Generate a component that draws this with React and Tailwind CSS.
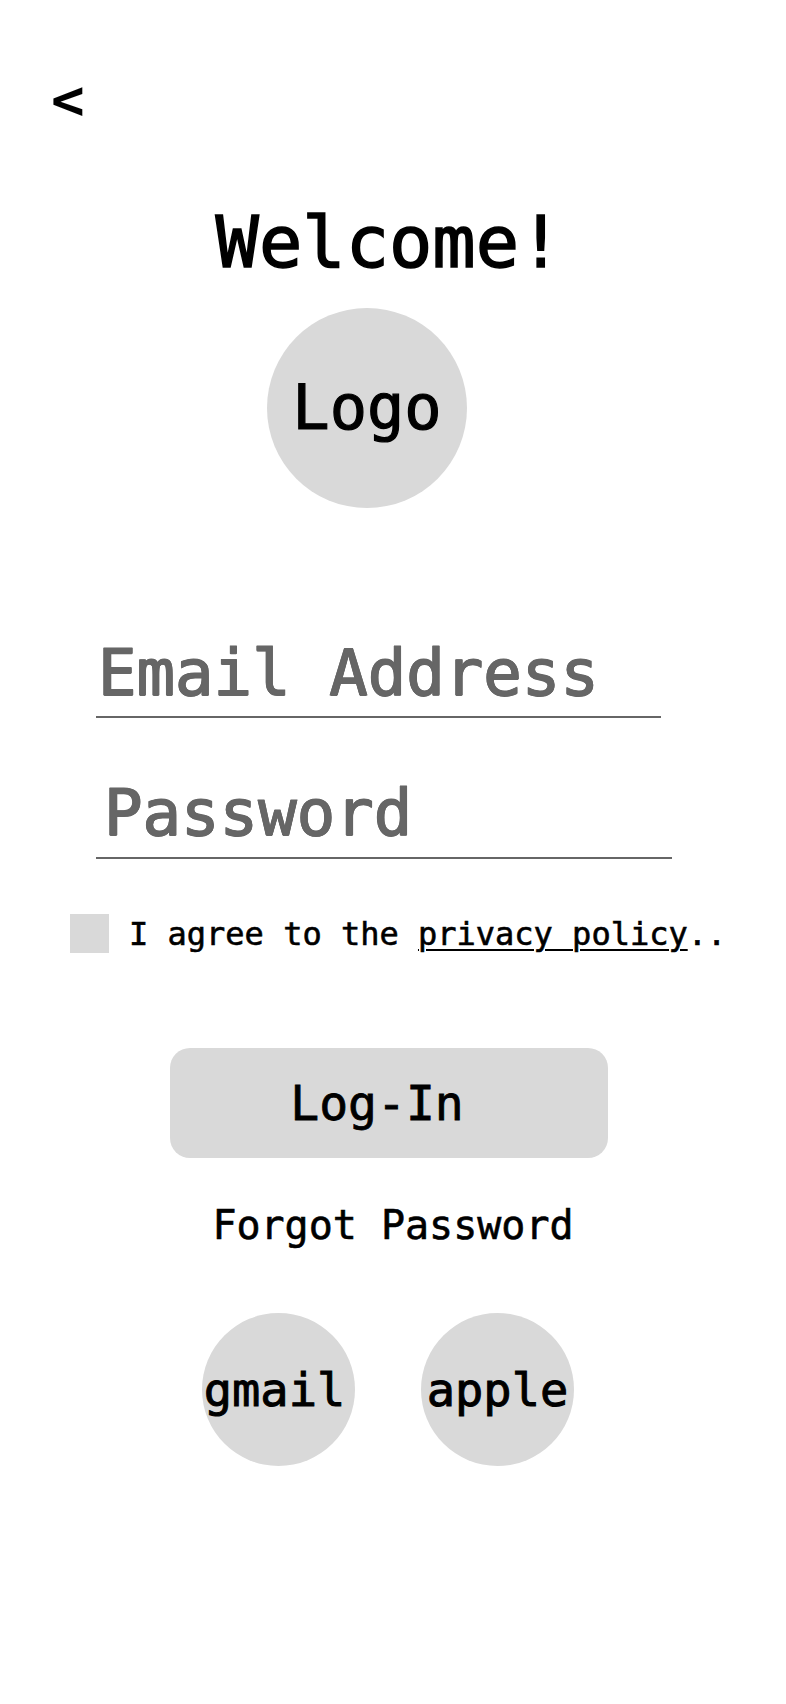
import React, { useState } from 'react';

const LoginPage = () => {
  const [agreed, setAgreed] = useState(false);

  return (
    <div className="min-h-[1704px] w-[786px] bg-white text-black font-['DejaVu_Sans_Mono',monospace] flex flex-col">
      <button type="button" className="ml-[51px] mt-[72px] self-start text-[56px] font-bold leading-none">
        &lt;
      </button>

      <h1 className="mt-[78px] pr-[8px] text-center text-[72px] leading-none [-webkit-text-stroke:1.5px_currentColor]">Welcome!</h1>

      <div className="mt-[30px] flex justify-center pr-[52px]">
        <div className="w-[200px] h-[200px] rounded-full bg-[#d9d9d9] flex items-center justify-center">
          <span className="text-[62px] leading-none [-webkit-text-stroke:1.2px_currentColor]">Logo</span>
        </div>
      </div>

      <div className="mt-[133px] ml-[96px] w-[565px] border-b-2 border-[#666666] pb-[11px]">
        <input
          type="email"
          placeholder="Email Address"
          className="w-full bg-transparent pl-[2px] text-[64px] leading-none h-[64px] text-[#666666] placeholder:text-[#666666] outline-none [-webkit-text-stroke:1.2px_#666666] placeholder:[text-shadow:0.7px_0_0_#666666,-0.7px_0_0_#666666,0_0.5px_0_#666666]"
        />
      </div>

      <div className="mt-[63px] ml-[96px] w-[576px] border-b-2 border-[#666666] pb-[12px]">
        <input
          type="password"
          placeholder="Password"
          className="w-full bg-transparent pl-[8px] text-[64px] leading-none h-[64px] text-[#666666] placeholder:text-[#666666] outline-none [-webkit-text-stroke:1.2px_#666666] placeholder:[text-shadow:0.7px_0_0_#666666,-0.7px_0_0_#666666,0_0.5px_0_#666666]"
        />
      </div>

      <label className="mt-[55px] ml-[70px] flex items-center gap-[20px]">
        <input
          type="checkbox"
          checked={agreed}
          onChange={() => setAgreed(!agreed)}
          className="appearance-none w-[39px] h-[39px] bg-[#d9d9d9] checked:bg-[#999999]"
        />
        <span className="text-[32px] leading-none whitespace-nowrap [-webkit-text-stroke:0.6px_currentColor]">
          I agree to the <span className="underline underline-offset-[4px] decoration-2">privacy policy</span>..
        </span>
      </label>

      <button type="button" className="mt-[95px] ml-[170px] w-[438px] h-[110px] rounded-[20px] bg-[#d9d9d9] pr-[24px] text-[48px] leading-none [-webkit-text-stroke:0.8px_currentColor]">
        Log-In
      </button>

      <button type="button" className="mt-[47px] text-center text-[40px] leading-none [-webkit-text-stroke:0.6px_currentColor]">
        Forgot Password
      </button>

      <div className="mt-[68px] ml-[202px] flex gap-[66px]">
        <button type="button" className="w-[153px] h-[153px] rounded-full bg-[#d9d9d9] flex items-center justify-center pr-[8px] text-[47px] leading-none [-webkit-text-stroke:1px_currentColor]">
          gmail
        </button>
        <button type="button" className="w-[153px] h-[153px] rounded-full bg-[#d9d9d9] flex items-center justify-center text-[47px] leading-none [-webkit-text-stroke:1px_currentColor]">
          apple
        </button>
      </div>
    </div>
  );
};

export default LoginPage;
